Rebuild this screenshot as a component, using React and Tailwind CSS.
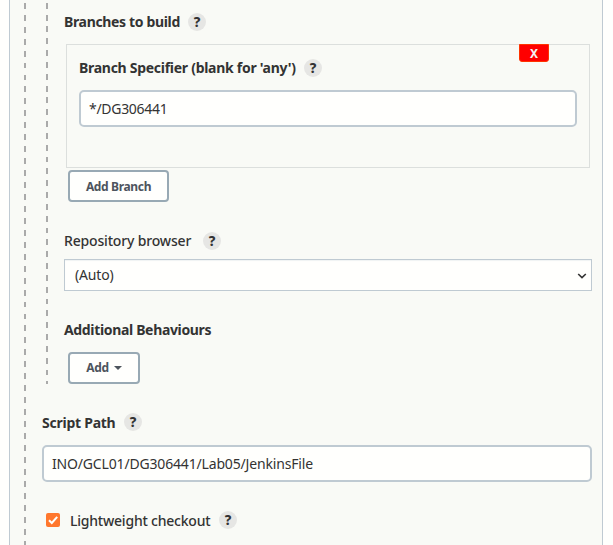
function Help({ className = '' }) {
  return (
    <span className={`flex h-[18px] w-[18px] shrink-0 items-center justify-center rounded-full bg-[#e6e6e4] pt-px text-[13.5px] leading-none font-extrabold text-[#333] ${className}`}>
      ?
    </span>
  );
}

function Label({ children, className = '' }) {
  return <span className={`block shrink-0 whitespace-nowrap text-[14px] leading-[20px] ${className}`}>{children}</span>;
}

export default function App() {
  return (
    <div className="h-[545px] w-[613px] overflow-hidden bg-[#fffffd] pl-[9px] font-['Noto_Sans','Open_Sans',sans-serif] text-[#333]">
      <div className="flex h-full w-[594px] border-x border-[#bfcad2] bg-[#f9faf6] pl-[14px]">
        <div className="h-full w-[2px] shrink-0 bg-[repeating-linear-gradient(to_bottom,transparent_0_2.8px,#aaa_2.8px_8.7px,transparent_8.7px_11.95px)]" />
        <div className="ml-[16px] w-[550px]">
          <section className="flex h-[384px] pl-[4px]">
            <div className="h-full w-[2px] shrink-0 bg-[repeating-linear-gradient(to_bottom,transparent_0_2.8px,#aaa_2.8px_8.7px,transparent_8.7px_11.83px)]" />
            <div className="ml-[16px] w-[528px]">
              <div className="flex h-[44px] items-center">
                <Label className="w-[116px] font-bold tracking-[-0.34px]">Branches to build</Label>
                <Help className="ml-[8px]" />
              </div>
              <div className="relative ml-[2px] h-[124px] w-[524px] border border-[#dcdfdd] px-[12px] pt-[13px]">
                <button className="absolute -top-px left-[452px] flex h-[18px] w-[30px] items-center justify-center rounded-b-[3px] border border-[#ff3300] bg-[#f00] pt-[2px] text-[12px] leading-none font-bold text-[#f4f4f4]">
                  X
                </button>
                <div className="flex h-[20px] items-center">
                  <Label className="w-[217px] font-bold tracking-[-0.28px]">Branch Specifier (blank for 'any')</Label>
                  <Help className="ml-[8px]" />
                </div>
                <div className="mt-[12px] flex h-[37px] items-center rounded-[5px] border-2 border-[#bfcad2] bg-[#fffffd] px-[8px]">
                  <Label className="tracking-[-0.3px]">*/DG306441</Label>
                </div>
              </div>
              <button className="mt-[2px] ml-[4px] flex h-[32px] w-[101px] items-center justify-center rounded-[4px] border-2 border-[#98a9b4] bg-[#fffffd] pt-[2px] text-[12px] font-bold tracking-[-0.35px] text-[#4d545d]">
                Add Branch
              </button>
              <div className="mt-[30px] flex h-[18px] items-center">
                <Label className="w-[127px] font-medium tracking-[-0.17px]">Repository browser</Label>
                <Help className="ml-[12px]" />
              </div>
              <div className="mt-[9px] flex h-[32px] items-center justify-between border border-[#bfcad2] bg-[#fffffd] pr-[4px] pl-[10px] shadow-[inset_0_1px_1px_#f0f3f3]">
                <Label className="tracking-[-0.17px]">(Auto)</Label>
                <svg className="mt-px h-[8px] w-[10px]" viewBox="0 0 10 8" fill="none" stroke="#333" strokeWidth="1.6">
                  <path d="M1.2 2 L5 5.6 L8.8 2" />
                </svg>
              </div>
              <Label className="mt-[29px] font-bold tracking-[-0.34px]">Additional Behaviours</Label>
              <button className="mt-[12px] ml-[4px] flex h-[32px] w-[72px] items-center rounded-[4px] border-2 border-[#98a9b4] bg-[#fffffd] pl-[16px] text-[12px] font-bold tracking-[-0.3px] text-[#4d545d]">
                <span className="w-[23px]">Add</span>
                <svg className="ml-[5px] h-[4px] w-[8px]" viewBox="0 0 8 4" fill="#4d545d">
                  <path d="M0 0 H8 L4 4 Z" />
                </svg>
              </button>
            </div>
          </section>
          <div className="mt-[29px] flex h-[18px] items-center">
            <Label className="w-[73px] pt-[2px] font-bold tracking-[-0.25px]">Script Path</Label>
            <Help className="ml-[9px]" />
          </div>
          <div className="mt-[14px] flex h-[37px] items-center rounded-[5px] border-2 border-[#bfcad2] bg-[#fffffd] px-[8px]">
            <Label className="tracking-[-0.17px]">INO/GCL01/DG306441/Lab05/JenkinsFile</Label>
          </div>
          <div className="mt-[29px] flex h-[18px] items-center pl-[4px]">
            <span className="flex h-[14px] w-[14px] items-center justify-center rounded-[2px] bg-[#ff772d]">
              <svg className="h-[14px] w-[14px]" viewBox="0 0 14 14" fill="none" stroke="#fffffd" strokeWidth="2">
                <path d="M3 7.2 L5.8 10 L11.2 3.8" />
              </svg>
            </span>
            <Label className="ml-[10px] w-[140px] pt-[2px] font-medium tracking-[-0.22px]">Lightweight checkout</Label>
            <Help className="ml-[9px]" />
          </div>
        </div>
      </div>
    </div>
  );
}
